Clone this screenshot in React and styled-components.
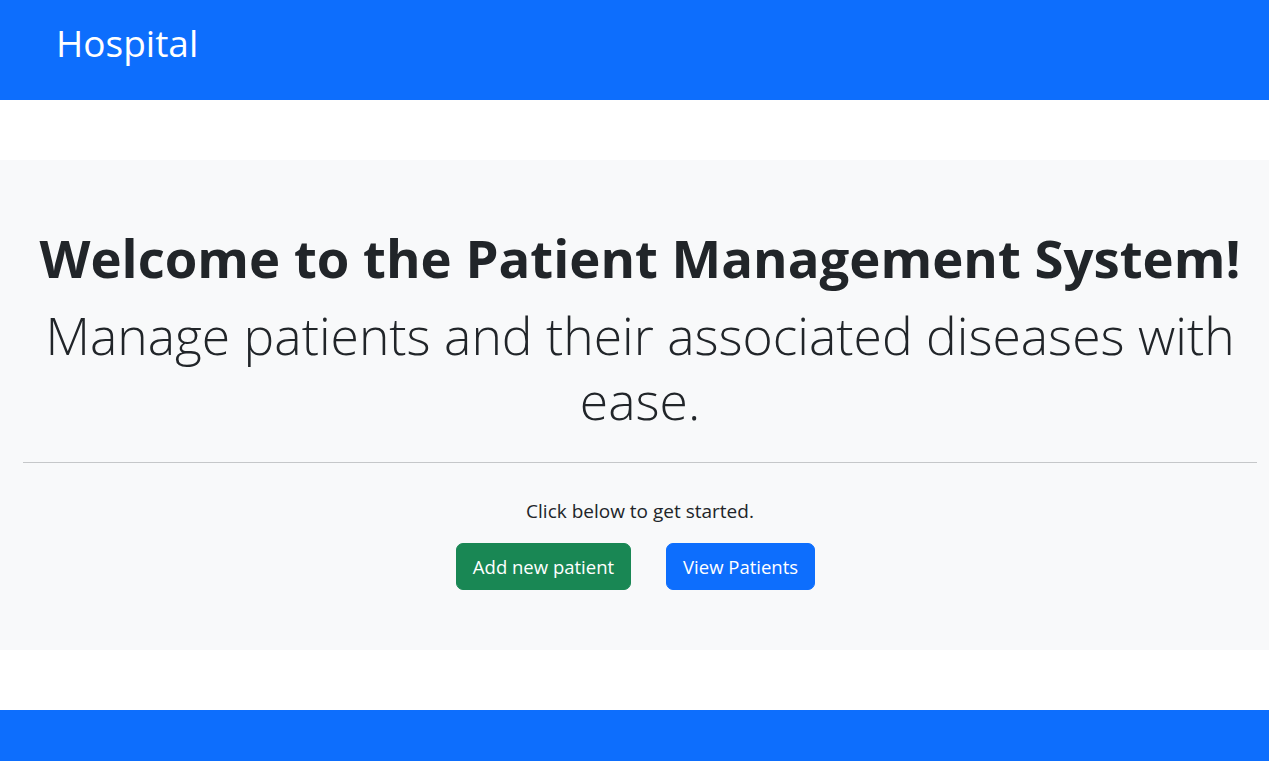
import styled, { createGlobalStyle } from 'styled-components'

const GlobalStyle = createGlobalStyle`
	body {
		margin: 0;
		font-family: 'Open Sans', 'Noto Sans', sans-serif;
		color: #212529;
		background: #fff;
	}
	* { box-sizing: border-box; }
`

const TopBar = styled.header`
	height: 100px;
	background: #0d6efd;
	display: flex;
	align-items: center;
	padding: 0 0 14px 56px;
`

const Brand = styled.a`
	color: #fff;
	font-size: 37px;
	text-decoration: none;
	line-height: 1.2;
`

const Main = styled.main`
	padding: 60px 0;
`

const Jumbo = styled.section`
	background: #f8f9fa;
	padding: 66px 12px 60px 23px;
	text-align: center;
`

const Title = styled.h1`
	margin: 0;
	font-size: 52.7px;
	font-weight: 700;
	line-height: 64px;
`

const Lead = styled.p`
	margin: 13px 0 0;
	font-size: 51.6px;
	font-weight: 300;
	line-height: 65px;
`

const Rule = styled.hr`
	margin: 29px 0 36px;
	border: 0;
	border-top: 1px solid #c5c7c9;
`

const Note = styled.p`
	margin: 0 0 20px;
	font-size: 19px;
	line-height: 24px;
`

const Actions = styled.div`
	display: flex;
	justify-content: center;
	gap: 35px;
	padding-right: 9px;
`

const Button = styled.a`
	display: inline-block;
	padding: 8px 16px;
	font-size: 18.5px;
	line-height: 29px;
	border-radius: 7px;
	color: #fff;
	text-decoration: none;
	background: ${p => (p.$variant === 'success' ? '#198754' : '#0d6efd')};
	border: 1px solid ${p => (p.$variant === 'success' ? '#198754' : '#0d6efd')};
`

const Footer = styled.footer`
	height: 51px;
	background: #0d6efd;
`

const App = () => {
	return (
		<>
			<GlobalStyle />
			<TopBar>
				<Brand href="#">Hospital</Brand>
			</TopBar>
			<Main>
				<Jumbo>
					<Title>Welcome to the Patient Management System!</Title>
					<Lead>Manage patients and their associated diseases with ease.</Lead>
					<Rule />
					<Note>Click below to get started.</Note>
					<Actions>
						<Button href="#" $variant="success">Add new patient</Button>
						<Button href="#">View Patients</Button>
					</Actions>
				</Jumbo>
			</Main>
			<Footer />
		</>
	)
}

export default App
